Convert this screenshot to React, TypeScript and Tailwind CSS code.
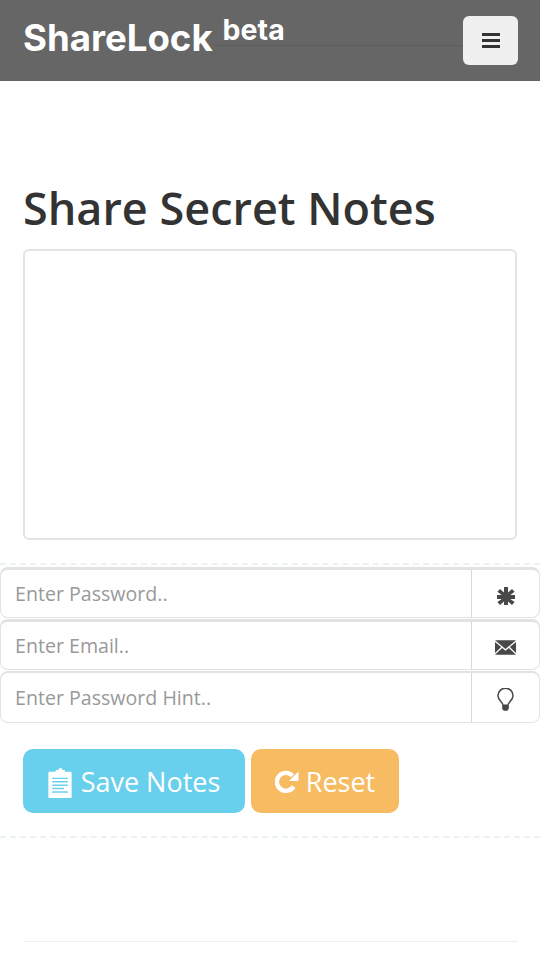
/* Form rows */
const fields = [
  { placeholder: "Enter Password..", icon: "asterisk" },
  { placeholder: "Enter Email..", icon: "envelope" },
  { placeholder: "Enter Password Hint..", icon: "bulb" },
];

const FieldIcon = ({ name }: { name: string }) => {
  if (name === "asterisk") {
    return (
      <svg viewBox="0 0 18 18" className="h-[18px] w-[18px] text-[#484848]" fill="currentColor">
        <path d="M7 0h4v5.500l4-3.600 2.600 2.900-4.300 3.200H18v3.900h-4.700l4.300 3.200-2.600 2.900-4-3.600V18H7v-3.600l-4 3.600-2.600-2.900 4.300-3.200H0V8h4.700L.4 4.800 3 1.900l4 3.600z" />
      </svg>
    );
  }
  if (name === "envelope") {
    return (
      <svg viewBox="0 0 22 15" className="h-[15px] w-[21px] text-[#484848]" fill="currentColor">
        <path d="M0 0h22L11 9z" />
        <path d="M0 1.800v11.400l6.500-6.100zM22 1.800v11.400l-6.500-6.100zM7.500 8l3.500 2.900L14.500 8 22 15H0z" />
      </svg>
    );
  }
  return (
    <svg viewBox="0 0 18 24" className="h-[23px] w-[17px] text-[#484848]" fill="none" stroke="currentColor">
      <path strokeWidth="1.600" d="M6.500 18c0-3-5.500-5-5.500-10a8 8 0 0 1 16 0c0 5-5.500 7-5.500 10z" />
      <path fill="currentColor" stroke="none" d="M5.500 18h7v3.500L11 24H7l-1.500-2.500z" />
    </svg>
  );
};

const ClipboardIcon = () => (
  <svg viewBox="0 0 24 32" className="h-[31px] w-[24px]" fill="currentColor">
    <path
      fillRule="evenodd"
      d="M8 3h2.500a2 2 0 0 1 4 0H17v2h6a1 1 0 0 1 1 1v26H0V6a1 1 0 0 1 1-1h6zM4 11v1.500h16V11zm0 3.500V16h16v-1.500zM4 18v1.500h16V18zm0 3.500V23h12v-1.500zM4 25v1.500h16V25z"
    />
  </svg>
);

const RepeatIcon = () => (
  <svg viewBox="0 0 24 24" className="h-[24px] w-[24px]" fill="none">
    <path stroke="currentColor" strokeWidth="4.400" d="M18.600 16.500A9 9 0 1 1 17.500 5.800" />
    <path fill="currentColor" d="M23.500 1.500V11H14z" />
  </svg>
);

const App = () => {
  return (
    <div className="relative h-[960px] w-[540px] overflow-hidden bg-white font-['Open_Sans',sans-serif]">
      {/* Navbar */}
      <header className="relative flex h-[81px] items-start justify-between bg-[#666666] pl-[23px] pr-[22px] pt-4">
        <div className="flex items-start font-['Inter',sans-serif] font-bold text-white">
          <span className="mt-[2px] text-[36.600px] leading-[41px]">ShareLock</span>
          <span className="ml-[10px] text-[28.500px] leading-[28px]">beta</span>
        </div>
        <div className="absolute left-[213px] top-[45px] h-px w-[250px] bg-[#5c5c5c]" />
        <button className="relative flex h-[49px] w-[55px] flex-col items-center justify-center gap-[3px] rounded-[6px] bg-[#f0f0f0]">
          <span className="h-[3px] w-[18px] bg-[#333]" />
          <span className="h-[3px] w-[18px] bg-[#333]" />
          <span className="h-[3px] w-[18px] bg-[#333]" />
        </button>
      </header>

      {/* Notes */}
      <main className="px-[23px]">
        <h1 className="mt-[94px] text-[45px] font-[550] leading-[66px] text-[#333]">
          Share Secret Notes
        </h1>
        <textarea className="mt-[8px] block h-[291px] w-[494px] resize-none rounded-[6px] border-2 border-[#e4e4e4] bg-white" />
      </main>

      <div className="mt-[23px] border-t-2 border-dashed border-[#eaf2f5]" />

      {/* Password, email and hint */}
      <div className="mt-[2px] flex flex-col gap-[1px]">
        {fields.map((f) => (
          <div
            key={f.placeholder}
            className="flex h-[51px] w-[540px] rounded-[8px] border-[1.500px] border-t-[3px] border-[#e2e2e2] last:h-[52px] last:border-t-2"
          >
            <input
              placeholder={f.placeholder}
              className="h-full min-w-0 flex-1 bg-transparent pl-[14px] text-[19.600px] text-[#333] outline-none placeholder:text-[#999]"
            />
            <div className="flex w-[68px] items-center justify-center border-l-[1.500px] border-[#d8d8d8] pt-1">
              <FieldIcon name={f.icon} />
            </div>
          </div>
        ))}
      </div>

      {/* Actions */}
      <div className="mt-[26px] flex gap-[6px] pl-[23px]">
        <button className="flex h-[64px] w-[222px] items-center justify-center gap-[9px] rounded-[10px] bg-[#68d0ec] pt-[2px] text-[27px] text-white">
          <ClipboardIcon />
          Save Notes
        </button>
        <button className="flex h-[64px] w-[148px] items-center justify-center gap-[7px] rounded-[10px] bg-[#f7bc62] pt-[2px] text-[27px] text-white">
          <RepeatIcon />
          Reset
        </button>
      </div>

      <div className="mt-[23px] border-t-2 border-dashed border-[#eaf2f5]" />

      <div className="ml-[23px] mr-[22px] mt-[103px] border-t border-[#eeeeee]" />
    </div>
  );
};

export default App;
